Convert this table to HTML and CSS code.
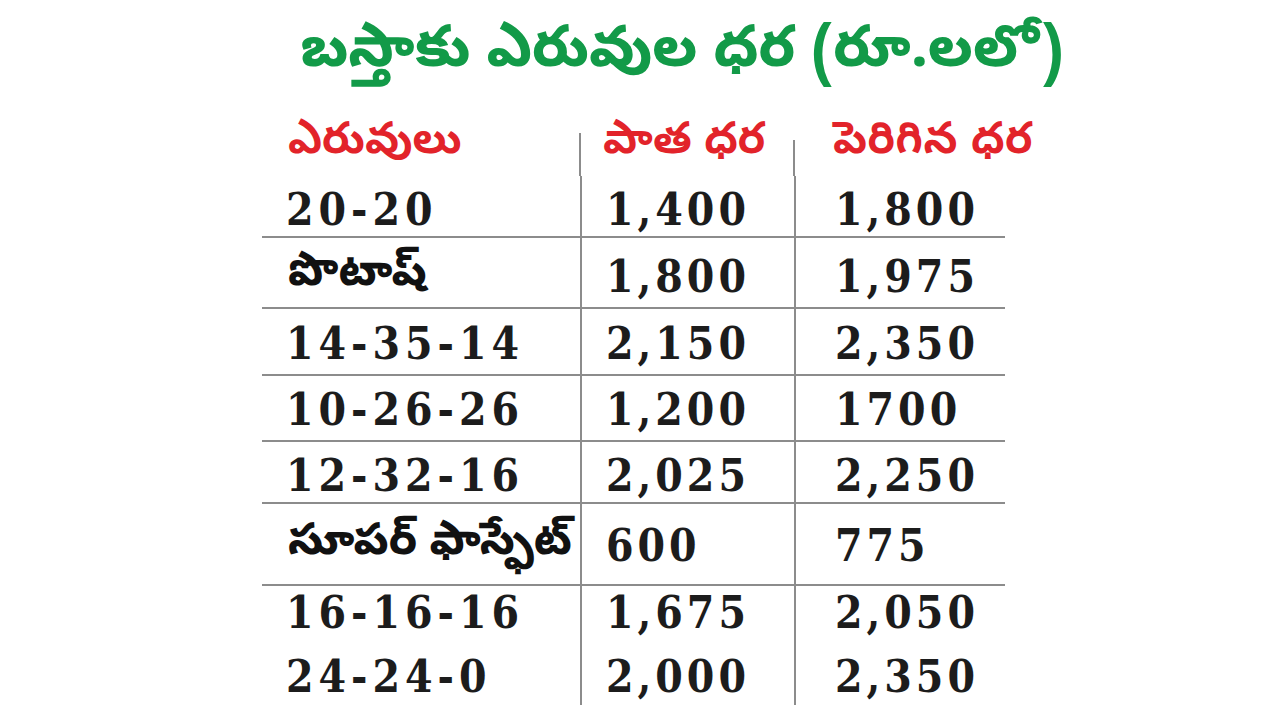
FILE: index.html
```html
<!DOCTYPE html>
<html lang="te">
<head>
<meta charset="utf-8">
<title>బస్తాకు ఎరువుల ధర</title>
<link rel="stylesheet" href="styles.css">
</head>
<body>
<main class="page">
  <h1 class="title">బస్తాకు ఎరువుల ధర (రూ.లలో)</h1>
  <table class="prices">
    <colgroup>
      <col class="w1"><col class="w2"><col class="w3">
    </colgroup>
    <thead>
      <tr class="head">
        <th class="c1">ఎరువులు</th>
        <th class="c2">పాత ధర</th>
        <th class="c3">పెరిగిన ధర</th>
      </tr>
    </thead>
    <tbody>
      <tr class="r1 line"><td class="c1">20-20</td><td class="c2">1,400</td><td class="c3">1,800</td></tr>
      <tr class="r2 line"><td class="c1 te">పొటాష్</td><td class="c2">1,800</td><td class="c3">1,975</td></tr>
      <tr class="r3 line"><td class="c1">14-35-14</td><td class="c2">2,150</td><td class="c3">2,350</td></tr>
      <tr class="r4 line"><td class="c1">10-26-26</td><td class="c2">1,200</td><td class="c3">1700</td></tr>
      <tr class="r5 line"><td class="c1">12-32-16</td><td class="c2">2,025</td><td class="c3">2,250</td></tr>
      <tr class="r6 line"><td class="c1 te">సూపర్ ఫాస్ఫేట్</td><td class="c2">600</td><td class="c3">775</td></tr>
      <tr class="r7"><td class="c1">16-16-16</td><td class="c2">1,675</td><td class="c3">2,050</td></tr>
      <tr class="r8"><td class="c1">24-24-0</td><td class="c2">2,000</td><td class="c3">2,350</td></tr>
    </tbody>
  </table>
</main>
</body>
</html>
```
FILE: styles.css
```css
html, body {
  margin: 0;
  padding: 0;
  background: #ffffff;
}

.page {
  width: 1280px;
  height: 720px;
  overflow: hidden;
  display: flex;
  flex-direction: column;
  align-items: flex-start;
}

.title {
  flex-shrink: 0;
  margin: 0;
  height: 110px;
  width: 1280px;
  padding-left: 84px;
  box-sizing: border-box;
  display: flex;
  align-items: center;
  justify-content: center;
  font-family: "Noto Sans Telugu", "Noto Sans", sans-serif;
  font-weight: 800;
  font-size: 57px;
  color: #129a48;
  white-space: nowrap;
}

.prices {
  flex-shrink: 0;
  margin-left: 262px;
  width: 743px;
  table-layout: fixed;
  border-collapse: collapse;
  font-family: "DejaVu Serif Condensed", "DejaVu Serif", serif;
  font-stretch: condensed;
  font-weight: 700;
  font-size: 44px;
  letter-spacing: 4px;
  color: #1c1c1c;
}

.w1 { width: 319px; }
.w2 { width: 214px; }
.w3 { width: 210px; }

.prices th,
.prices td {
  box-sizing: border-box;
  padding: 4px 0 0 0;
  vertical-align: middle;
  text-align: left;
  white-space: nowrap;
  line-height: 1;
  overflow: visible;
}

.c1 { padding-left: 24px !important; }
.c2 { padding-left: 24px !important; }
.c3 { padding-left: 39px !important; }

.prices td.c1 { letter-spacing: 5px; }

.prices td.c1,
.prices td.c2 { border-right: 2px solid #8c8c8c; }

.head th {
  height: 66px;
  font-family: "Noto Sans Telugu", "Noto Sans", sans-serif;
  font-stretch: normal;
  font-size: 44px;
  font-weight: 700;
  letter-spacing: 0;
  color: #e2232a;
}

.head th.c1 {
  padding-left: 26px !important;
  background: linear-gradient(#8c8c8c, #8c8c8c) right bottom / 2px 43px no-repeat;
}

.head th.c2 {
  padding-left: 22px !important;
  background: linear-gradient(#8c8c8c, #8c8c8c) right bottom / 2px 36px no-repeat;
}

.head th.c3 { padding-left: 38px !important; letter-spacing: 0.5px; }

.prices td.te {
  padding-left: 26px !important;
  font-family: "Noto Sans Telugu", "Noto Sans", sans-serif;
  font-stretch: normal;
  font-size: 44px;
  font-weight: 800;
  letter-spacing: 0;
  color: #111111;
}

.line td { border-bottom: 2px solid #8c8c8c; }

.r1 td { height: 61px; padding-top: 8px; }
.r2 td { height: 71px; padding-top: 8px; }
.r3 td { height: 67px; }
.r4 td { height: 66px; }
.r5 td { height: 62px; padding-top: 8px; }
.r6 td { height: 82px; }
.r7 td { height: 58px; padding-top: 0; padding-bottom: 4px; }
.r8 td { height: 62px; padding-top: 6px; }
```
